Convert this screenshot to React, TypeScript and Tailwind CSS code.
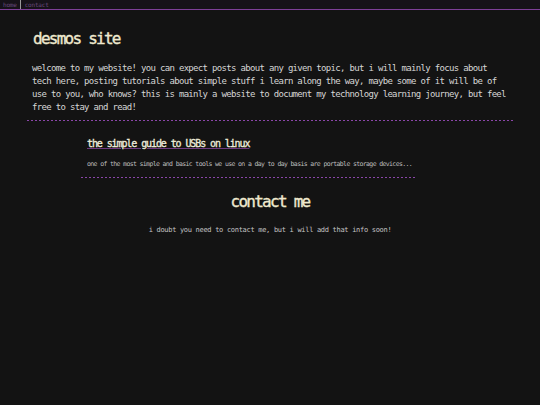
import React from "react";

const mono = "font-['DejaVu_Sans_Mono','Liberation_Mono',monospace]";

function Dash() {
  return (
    <div className="h-px w-full bg-[repeating-linear-gradient(90deg,#8a46a8_0_2px,transparent_2px_4px)]" />
  );
}

export default function App() {
  return (
    <div className={`min-h-[405px] bg-[#131313] ${mono}`}>
      <nav className="flex h-[10px] items-stretch border-b border-[#7e3f98] bg-[#161219] text-[6px] leading-[9px] tracking-[-0.2px] text-[#6a4a7c]">
        <a className="pl-[3px] pr-[3px] border-r border-[#9a9a9a]">home</a>
        <a className="pl-[4px]">contact</a>
      </nav>
      <main className="px-[27px]">
        <h1 className="mt-[18.5px] pl-[6px] text-[16px] font-normal leading-[20px] tracking-[-1.75px] text-[#efe9cf] [-webkit-text-stroke:0.35px_#efe9cf]">
          desmos site
        </h1>
        <p className="mt-[13px] pl-[5px] text-[9px] leading-[13px] tracking-[-0.68px] text-[#d6d6d6]">
          welcome to my website! you can expect posts about any given topic, but i will mainly focus about
          <br />
          tech here, posting tutorials about simple stuff i learn along the way, maybe some of it will be of
          <br />
          use to you, who knows? this is mainly a website to document my technology learning journey, but feel
          <br />
          free to stay and read!
        </p>
        <div className="mt-[6.5px]">
          <Dash />
        </div>
        <section className="ml-[54px] w-[336px]">
          <h2 className="mt-[15.5px] pl-[6px] text-[10px] font-normal leading-[14px] tracking-[-1.1px] text-[#f0eedc] [-webkit-text-stroke:0.3px_#f0eedc]">
            <span className="underline decoration-[#6e3a80] underline-offset-[1px]">
              the simple guide to USBs on linux
            </span>
          </h2>
          <p className="mt-[8px] pl-[6px] text-[6.5px] leading-[10px] tracking-[-0.63px] text-[#bdbdbd] whitespace-nowrap">
            one of the most simple and basic tools we use on a day to day basis are portable storage devices...
          </p>
          <div className="mt-[8px]">
            <Dash />
          </div>
        </section>
        <h1 className="mt-[14px] text-center text-[16px] font-normal leading-[20px] tracking-[-1.75px] text-[#efe9cf] [-webkit-text-stroke:0.35px_#efe9cf]">
          contact me
        </h1>
        <p className="mt-[13px] text-center text-[7px] leading-[10px] tracking-[-0.3px] text-[#c4c4c4]">
          i doubt you need to contact me, but i will add that info soon!
        </p>
      </main>
    </div>
  );
}
